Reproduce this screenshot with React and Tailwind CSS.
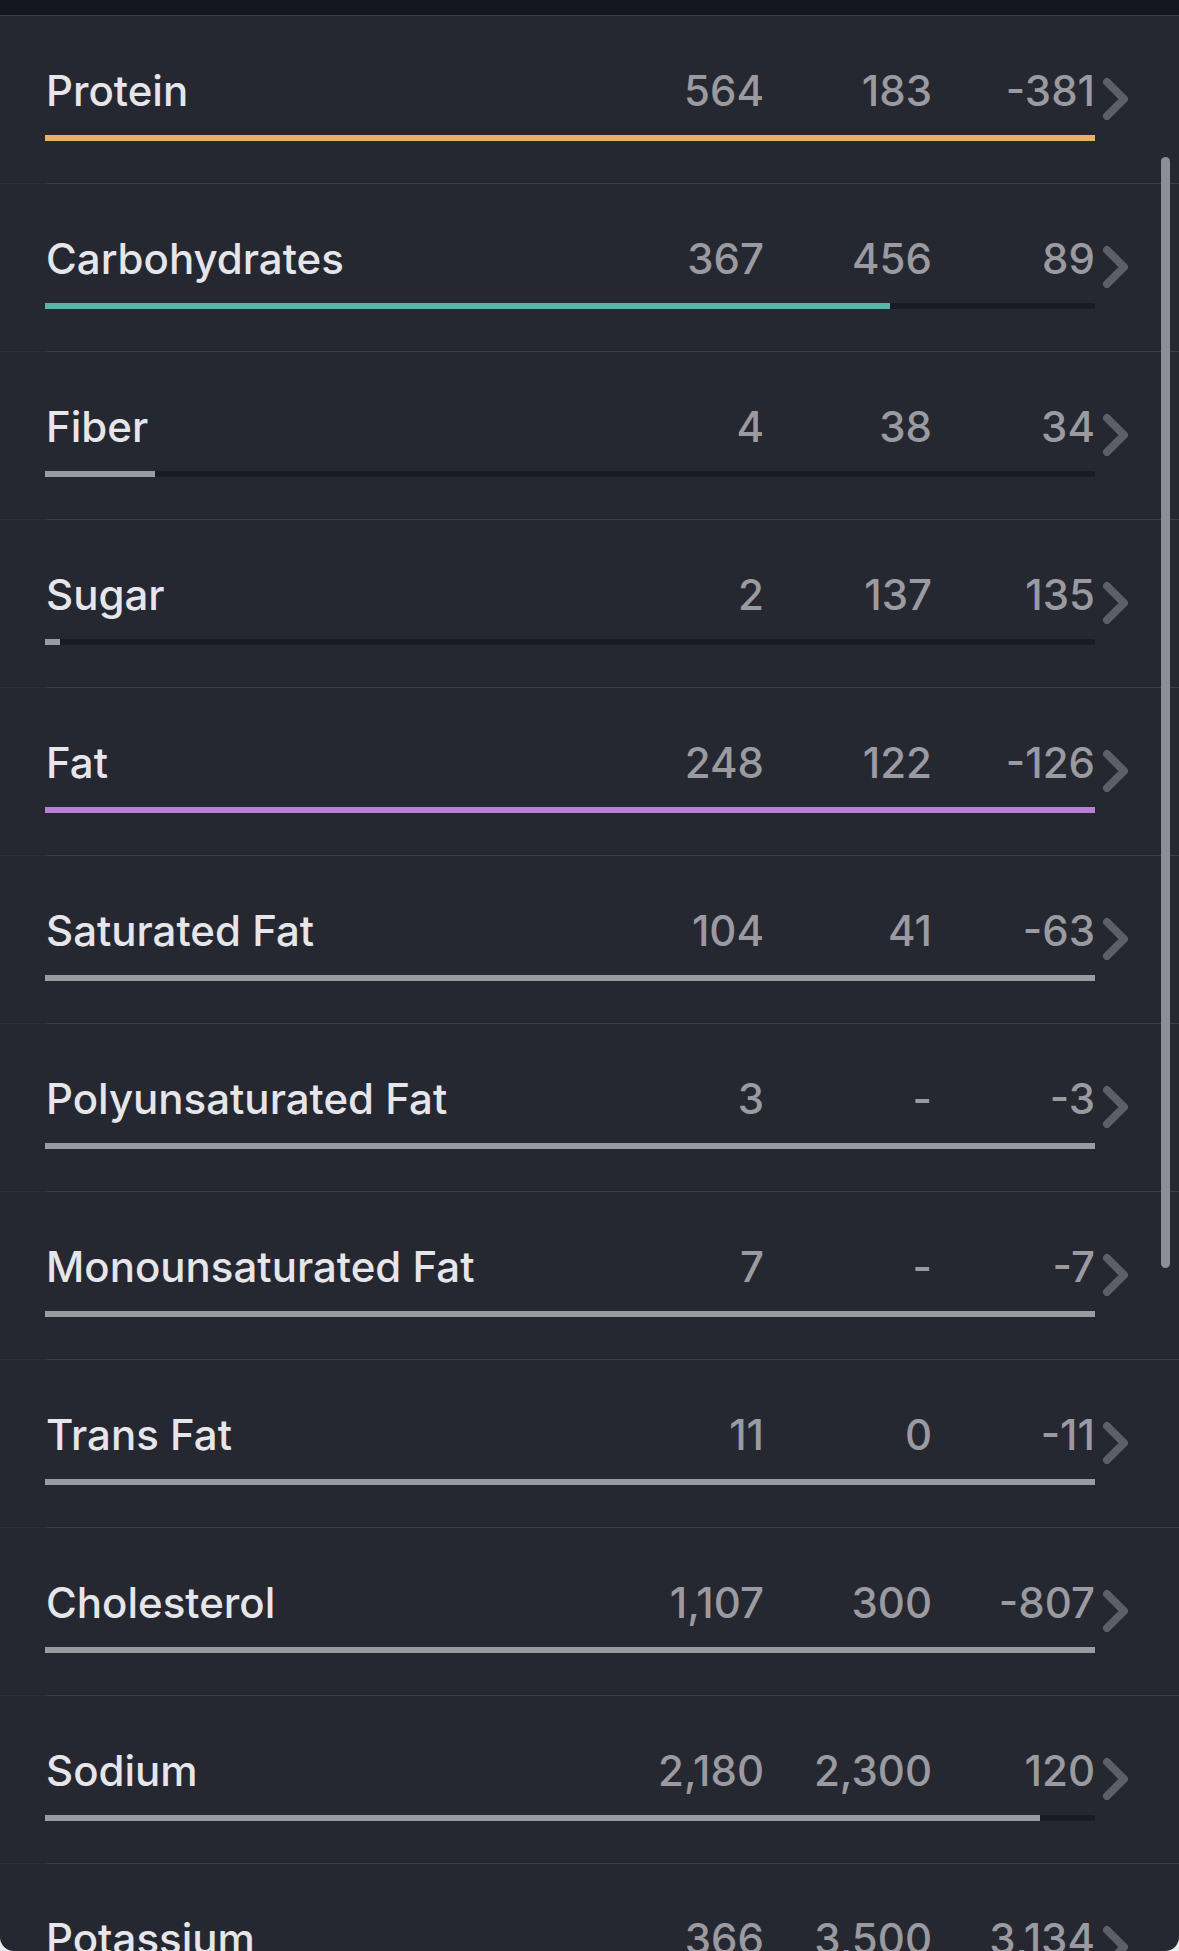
const rows = [
  { name: 'Protein', total: '564', goal: '183', left: '-381', pct: 100, color: 'bg-[#e9b165]' },
  { name: 'Carbohydrates', total: '367', goal: '456', left: '89', pct: 80.5, color: 'bg-[#60b1aa]' },
  { name: 'Fiber', total: '4', goal: '38', left: '34', pct: 10.5, color: 'bg-[#9b9ca1]' },
  { name: 'Sugar', total: '2', goal: '137', left: '135', pct: 1.46, color: 'bg-[#9b9ca1]' },
  { name: 'Fat', total: '248', goal: '122', left: '-126', pct: 100, color: 'bg-[#b97fd8]' },
  { name: 'Saturated Fat', total: '104', goal: '41', left: '-63', pct: 100, color: 'bg-[#9b9ca1]' },
  { name: 'Polyunsaturated Fat', total: '3', goal: '-', left: '-3', pct: 100, color: 'bg-[#9b9ca1]' },
  { name: 'Monounsaturated Fat', total: '7', goal: '-', left: '-7', pct: 100, color: 'bg-[#9b9ca1]' },
  { name: 'Trans Fat', total: '11', goal: '0', left: '-11', pct: 100, color: 'bg-[#9b9ca1]' },
  { name: 'Cholesterol', total: '1,107', goal: '300', left: '-807', pct: 100, color: 'bg-[#9b9ca1]' },
  { name: 'Sodium', total: '2,180', goal: '2,300', left: '120', pct: 94.8, color: 'bg-[#9b9ca1]' },
  { name: 'Potassium', total: '366', goal: '3,500', left: '3,134', pct: 10.5, color: 'bg-[#9b9ca1]' },
];

function Chevron() {
  return (
    <svg width="28" height="42" viewBox="0 0 28 42" className="mt-[62px] ml-[7px] shrink-0">
      <polyline
        points="5,4 22,21 5,38"
        fill="none"
        stroke="#5d5f68"
        strokeWidth="8"
        strokeLinecap="round"
        strokeLinejoin="round"
      />
    </svg>
  );
}

function NutrientRow({ row, first }) {
  return (
    <div>
      {first ? (
        <div className="h-px bg-[#3d3f48]" />
      ) : (
        <div className="flex h-px">
          <div className="w-[47px] bg-[#2e3039]" />
          <div className="flex-1 bg-[#3d3f48]" />
        </div>
      )}
      <div className="flex h-[167px] pl-[45px]">
        <div className="w-[1050px] shrink-0 pt-[50px]">
          <div className="flex h-[50px] items-center text-[42px] font-medium leading-[50px]">
            <span className="flex-1 pl-[1px] text-[#e5e5ea]">{row.name}</span>
            <span className="w-[200px] text-right text-[#9a9aa0]">{row.total}</span>
            <span className="w-[168px] text-right text-[#9a9aa0]">{row.goal}</span>
            <span className="w-[163px] text-right text-[#9a9aa0]">{row.left}</span>
          </div>
          <div className="mt-[19px] h-[6px] bg-[#191b24]">
            <div className={`h-full ${row.color}`} style={{ width: `${row.pct}%` }} />
          </div>
        </div>
        <Chevron />
      </div>
    </div>
  );
}

export default function App() {
  return (
    <div className="min-h-screen bg-[#ececef]" style={{ fontFamily: 'Inter, "Noto Sans", sans-serif' }}>
      <div className="relative h-[1951px] overflow-hidden rounded-b-[14px] bg-[#262831]">
        <div className="h-[15px] bg-[#151720]" />
        {rows.map((row, i) => (
          <NutrientRow key={row.name} row={row} first={i === 0} />
        ))}
        <div className="absolute left-[1161px] top-[157px] h-[1111px] w-[9px] rounded-full bg-[#8e8f96]" />
      </div>
    </div>
  );
}
